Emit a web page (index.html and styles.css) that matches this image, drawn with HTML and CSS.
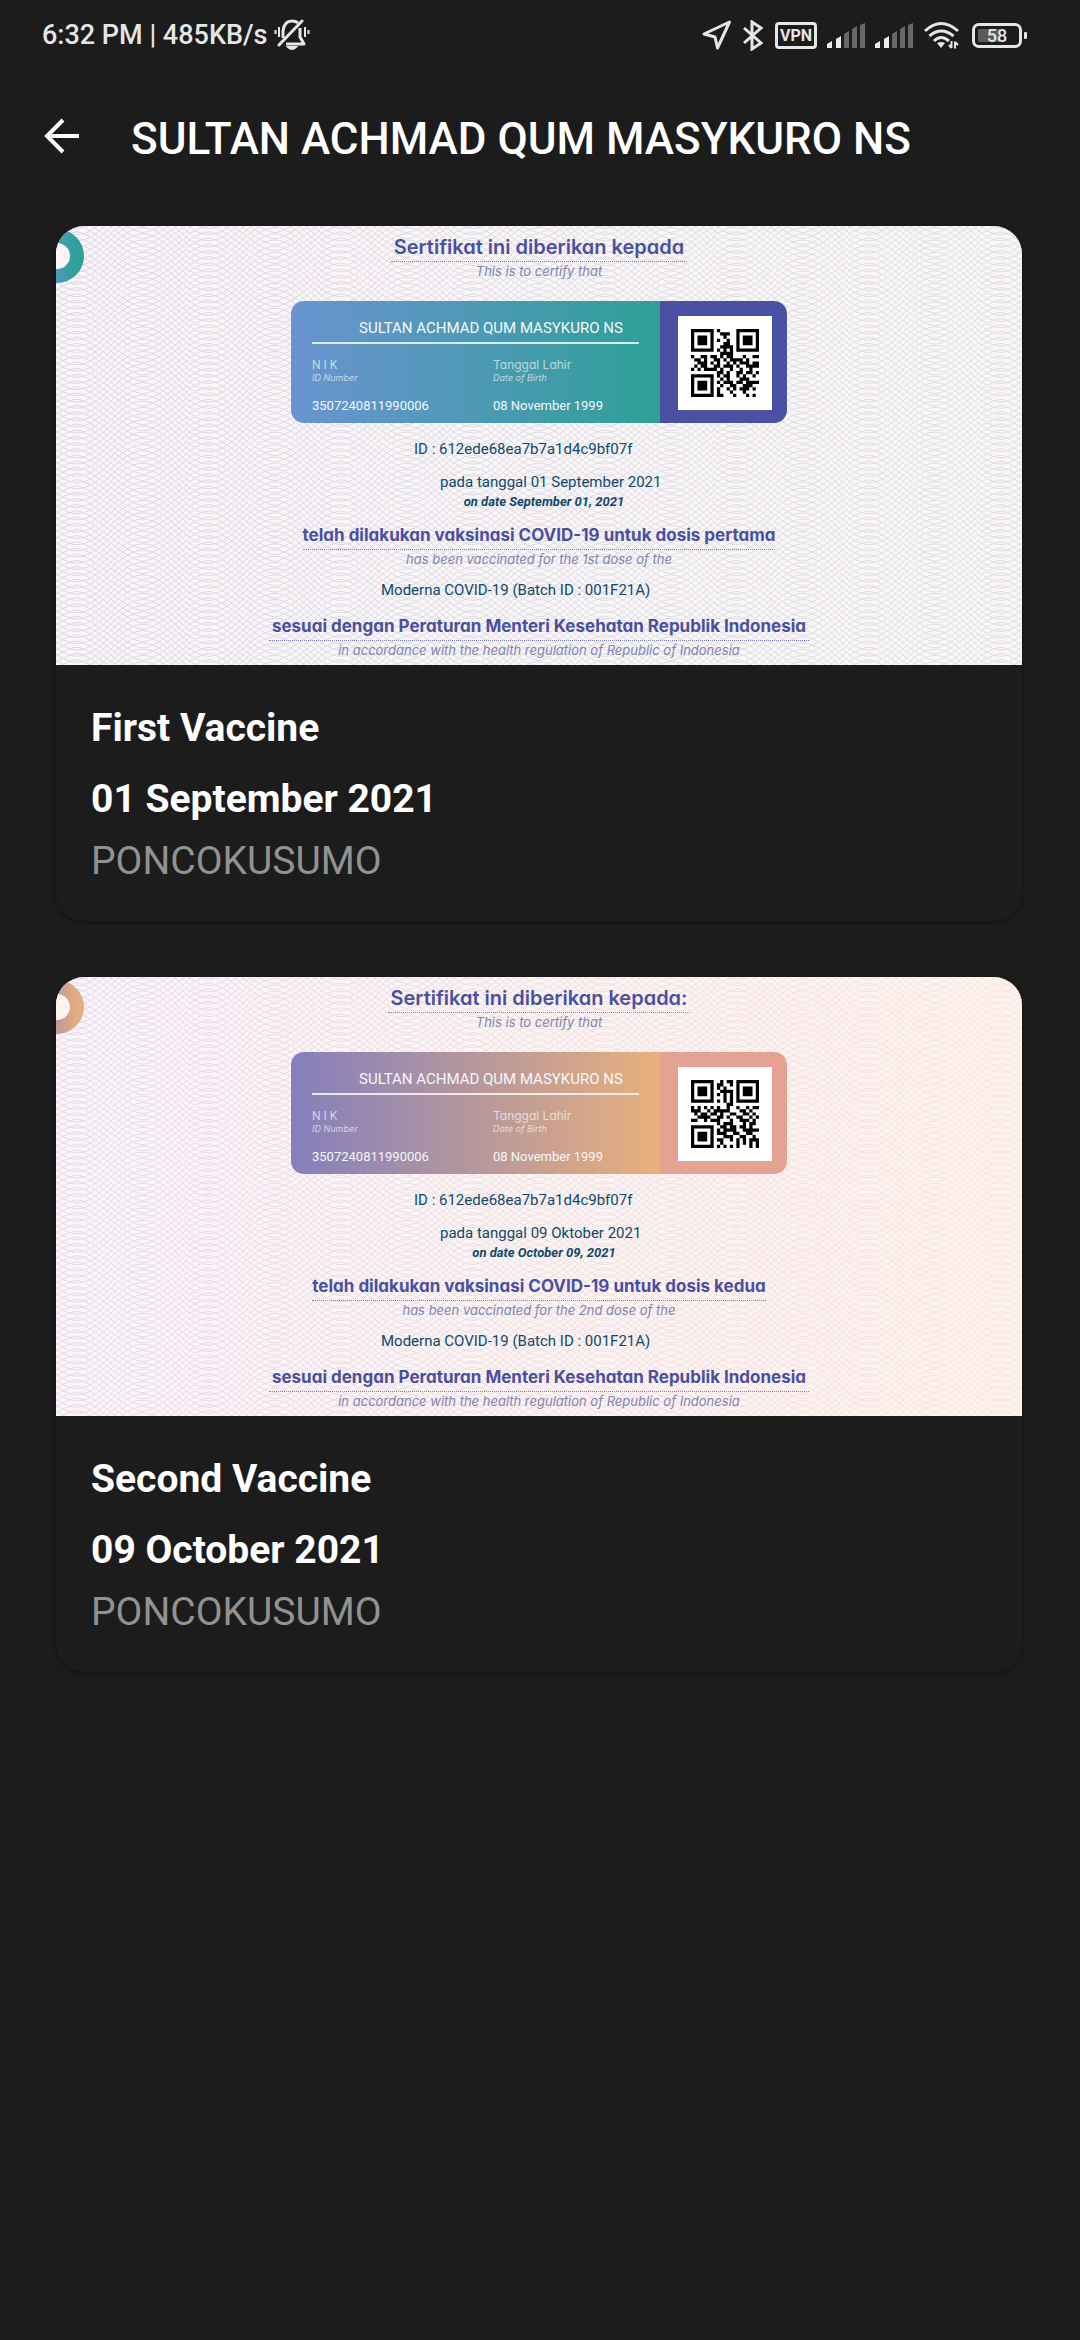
FILE: index.html
```html
<!DOCTYPE html>
<html lang="id">
<head>
<meta charset="utf-8">
<meta name="viewport" content="width=device-width, initial-scale=1">
<title>SULTAN ACHMAD QUM MASYKURO NS</title>
<link rel="stylesheet" href="styles.css">
</head>
<body>
<svg class="defs" aria-hidden="true">
  <defs>
    <path id="wave-a" d="M-45 19C-29 17 0-17 21-19C39-17 67 17 87 19C107 17 135-17 153-19"/>
    <path id="wave-b" d="M-45-19C-21-19-3 19 21 19C45 19 63-19 87-19C111-19 129 19 153 19"/>
    <g id="weave">
      <use href="#wave-a"/><use href="#wave-b" y="2"/>
    </g>
    <g id="weave-band">
      <use href="#weave"/><use href="#weave" y="6.2"/><use href="#weave" y="12.4"/><use href="#weave" y="18.6"/><use href="#weave" y="24.8"/>
    </g>
    <pattern id="guilloche" width="132" height="31" patternUnits="userSpaceOnUse">
      <g fill="none" stroke="#fff" stroke-width="1">
        <use href="#weave-band" y="-31"/><use href="#weave-band"/><use href="#weave-band" y="31"/>
      </g>
    </pattern>
    <mask id="guilloche-mask" maskUnits="userSpaceOnUse" x="0" y="0" width="3000" height="1000">
      <rect width="3000" height="1000" fill="url(#guilloche)"/>
    </mask>
    <linearGradient id="ink-cool"><stop stop-color="#dbd6e6"/><stop offset=".5" stop-color="#dddce5"/><stop offset="1" stop-color="#dcdfdf"/></linearGradient>
    <linearGradient id="ink-warm"><stop stop-color="#e3d9e9"/><stop offset=".5" stop-color="#eedfe4"/><stop offset="1" stop-color="#f7e6e0"/></linearGradient>
    <linearGradient id="ring-cool"><stop offset=".5" stop-color="#4a9ab4"/><stop offset="1" stop-color="#2fa199"/></linearGradient>
    <linearGradient id="ring-warm"><stop offset=".5" stop-color="#c09a9b"/><stop offset="1" stop-color="#e5ae80"/></linearGradient>
    <path id="finder" fill-rule="evenodd" d="M0 0h7v7h-7zM1 1v5h5v-5zM2 2h3v3h-3z"/>
    <g id="bars">
      <path fill="#ececec" d="M0 21l5-3v7H0zM9 16l5-3v12H9z"/>
      <path fill="#686868" d="M17 11l5-3v17h-5zM25 6l5-3v22h-5zM33 2l5-2v25h-5z"/>
    </g>
  </defs>
</svg>

<header class="status">
  <div class="status-side">
    <span>6:32 PM | 485KB/s</span>
    <svg class="bell" width="36" height="32" viewBox="0 0 36 32" fill="none" stroke="#e6e6e6" stroke-width="3" aria-hidden="true">
      <path d="M9 19V12Q10 2 18 2Q22 2 24 4M26 9V18L30 25H12" stroke-linejoin="round"/>
      <path d="M5 26L28 2" stroke-linecap="round"/>
      <path d="M14 28Q18 32 22 28Z" stroke-width="2" fill="#e6e6e6"/>
      <path d="M1.500 11V15M5 8V18M31 8V18M34.500 11V15" stroke-width="2"/>
    </svg>
  </div>
  <div class="status-side">
    <svg width="30" height="30" viewBox="0 0 30 30" fill="none" stroke="#e6e6e6" stroke-width="3" stroke-linejoin="round" aria-hidden="true"><path d="M27.500 2L2 14L13 17L15.500 28Z"/></svg>
    <svg class="bt" width="20" height="31" viewBox="0 0 20 31" fill="none" stroke="#e6e6e6" stroke-width="3" aria-hidden="true"><path d="M1 8L18 23L9 29V2L18 8L1 23"/></svg>
    <span class="vpn">VPN</span>
    <svg class="cell" width="38" height="25" viewBox="0 0 38 25" aria-hidden="true"><use href="#bars"/></svg>
    <svg class="cell" width="38" height="25" viewBox="0 0 38 25" aria-hidden="true"><use href="#bars"/></svg>
    <svg class="wifi" width="38" height="28" viewBox="0 0 38 28" fill="none" stroke="#e6e6e6" stroke-width="3" aria-hidden="true">
      <path d="M2 10Q18 -5 35 10M6.500 15Q18 5 30.500 15M11 20Q18 13 26 20"/>
      <path d="M14 22Q18 20 22 22L18 27Z" fill="#e6e6e6" stroke="none"/>
      <path d="M28.500 20V27M26 24L28.500 27M32 27.500V20.500M32 21L35 24" stroke-width="2"/>
    </svg>
    <span class="battery">58</span>
  </div>
</header>

<nav class="appbar">
  <button class="back" type="button" aria-label="Back">
    <svg width="36" height="36" viewBox="0 0 36 36" fill="none" stroke="#fff" stroke-width="4" aria-hidden="true"><path d="M35 18H4M19 2L3 18L19 34"/></svg>
  </button>
  <h1>SULTAN ACHMAD QUM MASYKURO NS</h1>
</nav>

<main class="cards">
  <article class="card">
    <section class="cert cert-cool">
      <svg class="backdrop" aria-hidden="true">
        <rect width="100%" height="100%" fill="url(#ink-cool)" mask="url(#guilloche-mask)"/>
        <circle cx="1" cy="30" r="13" fill="#faf5f6"/>
        <circle cx="1" cy="30" r="20" fill="none" stroke="url(#ring-cool)" stroke-width="14"/>
      </svg>
      <p class="head head-top">Sertifikat ini diberikan kepada</p>
      <p class="sub">This is to certify that</p>
      <div class="panel">
        <div class="identity">
          <p class="name">SULTAN ACHMAD QUM MASYKURO NS</p>
          <div class="fields">
            <div class="field"><p class="label nik">N I K</p><p class="hint">ID Number</p><p class="value">3507240811990006</p></div>
            <div class="field"><p class="label">Tanggal Lahir</p><p class="hint">Date of Birth</p><p class="value">08 November 1999</p></div>
          </div>
        </div>
        <div class="code">
          <svg width="68" height="68" viewBox="0 0 21 21" role="img" aria-label="QR code">
            <use href="#finder"/><use href="#finder" x="14"/><use href="#finder" y="14"/>
            <path d="M8 0h1v1h-1zM9 1h3v1h-3zM10 2h1v1h-1zM8 3h1v1h-1zM11 3h1v1h-1zM10 4h2v1h-2zM9 5h4v1h-4zM8 6h1v1h-1zM10 6h1v1h-1zM12 6h1v1h-1zM9 7h4v1h-4z
              M0 8h1v1h-1zM3 8h2v1h-2zM6 8h2v1h-2zM9 8h1v1h-1zM11 8h2v1h-2zM16 8h1v1h-1zM19 8h2v1h-2z
              M1 9h2v1h-2zM4 9h1v1h-1zM7 9h2v1h-2zM10 9h1v1h-1zM12 9h4v1h-4zM17 9h1v1h-1z
              M2 10h3v1h-3zM6 10h1v1h-1zM8 10h1v1h-1zM11 10h1v1h-1zM13 10h1v1h-1zM15 10h3v1h-3zM19 10h2v1h-2z
              M1 11h1v1h-1zM3 11h2v1h-2zM7 11h2v1h-2zM10 11h3v1h-3zM14 11h1v1h-1zM17 11h4v1h-4z
              M0 12h1v1h-1zM2 12h1v1h-1zM4 12h4v1h-4zM9 12h1v1h-1zM12 12h1v1h-1zM15 12h1v1h-1zM18 12h1v1h-1z
              M8 13h2v1h-2zM11 13h1v1h-1zM14 13h2v1h-2zM17 13h2v1h-2zM20 13h1v1h-1z
              M8 14h1v1h-1zM10 14h2v1h-2zM14 14h1v1h-1zM16 14h1v1h-1zM19 14h1v1h-1z
              M9 15h1v1h-1zM11 15h1v1h-1zM15 15h3v1h-3zM8 16h1v1h-1zM10 16h3v1h-3zM14 16h2v1h-2zM17 16h4v1h-4z
              M9 17h1v1h-1zM12 17h2v1h-2zM16 17h3v1h-3zM8 18h1v1h-1zM11 18h1v1h-1zM13 18h1v1h-1zM15 18h3v1h-3zM19 18h1v1h-1z
              M8 19h1v1h-1zM12 19h1v1h-1zM16 19h1v1h-1zM8 20h2v1h-2zM13 20h1v1h-1zM17 20h1v1h-1zM19 20h1v1h-1z"/>
          </svg>
        </div>
      </div>
      <div class="sheet">
        <p class="fact fact-id">ID : 612ede68ea7b7a1d4c9bf07f</p>
        <p class="fact fact-date">pada tanggal 01 September 2021</p>
        <p class="date-en">on date September 01, 2021</p>
        <p class="head head-dose">telah dilakukan vaksinasi COVID-19 untuk dosis pertama</p>
        <p class="sub">has been vaccinated for the 1st dose of the</p>
        <p class="fact fact-batch">Moderna COVID-19 (Batch ID : 001F21A)</p>
        <p class="head head-rule">sesuai dengan Peraturan Menteri Kesehatan Republik Indonesia</p>
        <p class="sub">in accordance with the health regulation of Republic of Indonesia</p>
      </div>
    </section>
    <div class="summary">
      <h2>First Vaccine</h2>
      <p class="date">01 September 2021</p>
      <p class="place">PONCOKUSUMO</p>
    </div>
  </article>

  <article class="card">
    <section class="cert cert-warm">
      <svg class="backdrop" aria-hidden="true">
        <rect width="100%" height="100%" fill="url(#ink-warm)" mask="url(#guilloche-mask)"/>
        <circle cx="1" cy="30" r="13" fill="#fdf3f3"/>
        <circle cx="1" cy="30" r="20" fill="none" stroke="url(#ring-warm)" stroke-width="14"/>
      </svg>
      <p class="head head-top">Sertifikat ini diberikan kepada:</p>
      <p class="sub">This is to certify that</p>
      <div class="panel">
        <div class="identity">
          <p class="name">SULTAN ACHMAD QUM MASYKURO NS</p>
          <div class="fields">
            <div class="field"><p class="label nik">N I K</p><p class="hint">ID Number</p><p class="value">3507240811990006</p></div>
            <div class="field"><p class="label">Tanggal Lahir</p><p class="hint">Date of Birth</p><p class="value">08 November 1999</p></div>
          </div>
        </div>
        <div class="code">
          <svg width="68" height="68" viewBox="0 0 21 21" role="img" aria-label="QR code">
            <use href="#finder"/><use href="#finder" x="14"/><use href="#finder" y="14"/>
            <path d="M9 0h1v1h-1zM11 0h2v1h-2zM8 1h2v1h-2zM12 1h1v1h-1zM8 2h1v1h-1zM10 2h1v1h-1zM9 3h4v1h-4zM8 4h1v1h-1zM10 4h1v1h-1zM12 4h1v1h-1zM10 5h1v1h-1zM12 5h1v1h-1zM8 6h1v1h-1zM10 6h1v1h-1zM12 6h1v1h-1zM11 7h2v1h-2z
              M0 8h1v1h-1zM2 8h1v1h-1zM4 8h1v1h-1zM6 8h1v1h-1zM8 8h1v1h-1zM11 8h1v1h-1zM14 8h1v1h-1zM17 8h1v1h-1zM19 8h2v1h-2z
              M0 9h3v1h-3zM5 9h1v1h-1zM7 9h5v1h-5zM15 9h2v1h-2zM18 9h1v1h-1z
              M1 10h1v1h-1zM3 10h2v1h-2zM6 10h2v1h-2zM9 10h1v1h-1zM12 10h2v1h-2zM16 10h2v1h-2zM19 10h1v1h-1z
              M2 11h4v1h-4zM8 11h2v1h-2zM11 11h1v1h-1zM14 11h2v1h-2zM18 11h1v1h-1zM20 11h1v1h-1z
              M0 12h2v1h-2zM4 12h1v1h-1zM6 12h3v1h-3zM12 12h1v1h-1zM15 12h3v1h-3zM19 12h1v1h-1z
              M8 13h1v1h-1zM10 13h3v1h-3zM16 13h1v1h-1zM18 13h2v1h-2zM9 14h2v1h-2zM12 14h2v1h-2zM15 14h2v1h-2zM18 14h1v1h-1z
              M8 15h1v1h-1zM10 15h4v1h-4zM16 15h5v1h-5zM8 16h3v1h-3zM13 16h2v1h-2zM17 16h2v1h-2z
              M10 17h3v1h-3zM15 17h2v1h-2zM19 17h1v1h-1zM8 18h2v1h-2zM12 18h1v1h-1zM14 18h1v1h-1zM16 18h1v1h-1zM18 18h3v1h-3z
              M9 19h1v1h-1zM14 19h1v1h-1zM16 19h1v1h-1zM18 19h1v1h-1zM20 19h1v1h-1zM8 20h1v1h-1zM10 20h1v1h-1zM12 20h1v1h-1zM14 20h1v1h-1zM18 20h1v1h-1zM20 20h1v1h-1z"/>
          </svg>
        </div>
      </div>
      <div class="sheet">
        <p class="fact fact-id">ID : 612ede68ea7b7a1d4c9bf07f</p>
        <p class="fact fact-date">pada tanggal 09 Oktober 2021</p>
        <p class="date-en">on date October 09, 2021</p>
        <p class="head head-dose">telah dilakukan vaksinasi COVID-19 untuk dosis kedua</p>
        <p class="sub">has been vaccinated for the 2nd dose of the</p>
        <p class="fact fact-batch">Moderna COVID-19 (Batch ID : 001F21A)</p>
        <p class="head head-rule">sesuai dengan Peraturan Menteri Kesehatan Republik Indonesia</p>
        <p class="sub">in accordance with the health regulation of Republic of Indonesia</p>
      </div>
    </section>
    <div class="summary">
      <h2>Second Vaccine</h2>
      <p class="date">09 October 2021</p>
      <p class="place">PONCOKUSUMO</p>
    </div>
  </article>
</main>
</body>
</html>
```
FILE: styles.css
```css
* {
  box-sizing: border-box;
  margin: 0;
  padding: 0;
}

body {
  min-height: 100vh;
  background: #1c1c1c;
  color: #fff;
  font-family: Roboto, "Liberation Sans", sans-serif;
}

svg {
  display: block;
  flex: none;
}

.defs {
  position: absolute;
  width: 0;
  height: 0;
}

/* Status bar */
.status {
  display: flex;
  justify-content: space-between;
  padding: 18px 58px 0 42px;
  height: 70px;
  color: #e6e6e6;
  font-size: 27px;
  font-weight: 500;
  line-height: 36px;
}

.status-side {
  display: flex;
  align-items: center;
  height: 34px;
}

.bell {
  margin-left: 7px;
}

.bt {
  margin-left: 11px;
}

.vpn {
  margin-left: 12px;
  width: 42px;
  height: 27px;
  border: 3px solid #e6e6e6;
  border-radius: 4px;
  font-size: 16px;
  font-weight: 700;
  line-height: 21px;
  text-align: center;
}

.cell {
  margin-left: 10px;
}

.wifi {
  margin: 0 11px 0 10px;
}

.battery {
  position: relative;
  width: 50px;
  height: 25px;
  border: 3px solid #e6e6e6;
  border-radius: 7px;
  background: linear-gradient(#5a5a5a, #5a5a5a) 3px 3px / 22px 13px no-repeat;
  font-size: 18px;
  line-height: 20px;
  text-align: center;
}

.battery::after {
  content: "";
  position: absolute;
  top: 6px;
  right: -8px;
  width: 3px;
  height: 7px;
  border-radius: 1px;
  background: #e6e6e6;
}

/* App bar */
.appbar {
  display: flex;
  align-items: center;
  gap: 51px;
  height: 132px;
  padding: 0 44px;
}

.back {
  border: 0;
  background: none;
  cursor: pointer;
}

h1 {
  padding-top: 6px;
  font-size: 44px;
  font-weight: 500;
  line-height: 56px;
  white-space: nowrap;
}

/* Cards */
.cards {
  display: flex;
  flex-direction: column;
  gap: 56px;
  padding: 24px 58px 56px 56px;
}

.card {
  overflow: hidden;
  border-radius: 28px;
  box-shadow: 0 2px 5px rgba(0, 0, 0, 0.35);
}

.summary {
  padding: 38px 35px 35px;
  font-size: 39px;
}

h2,
.date {
  font-size: 39px;
  font-weight: 700;
  line-height: 50px;
}

.date {
  margin-top: 21px;
}

.place {
  margin-top: 12px;
  color: #929292;
  line-height: 50px;
}

/* Certificate */
.cert {
  position: relative;
  display: flex;
  flex-direction: column;
  align-items: center;
  padding: 9px 0 6px;
}

.cert-cool {
  background: #faf5f6;
}

.cert-warm {
  background: linear-gradient(90deg, #fbf4f9, #fdf3f2 60%, #fef2ed);
}

.backdrop {
  position: absolute;
  inset: 0;
  width: 100%;
  height: 100%;
}

.cert p,
.panel,
.sheet {
  position: relative;
  white-space: nowrap;
}

.head,
.sub,
.label,
.hint {
  font-family: Inter, "Open Sans", sans-serif;
  font-feature-settings: "cv11";
}

.head {
  padding-bottom: 2px;
  border-bottom: 1px dotted #8583bb;
  color: #4a50a0;
  font-size: 17px;
  font-weight: 700;
  line-height: 24px;
}

.head-top {
  padding-right: 3px;
  padding-left: 3px;
  font-size: 20px;
  font-weight: 600;
}

.sub {
  color: #7e84b2;
  font-size: 13px;
  font-style: italic;
  line-height: 18px;
}

.panel {
  display: flex;
  width: 496px;
  height: 122px;
  margin-top: 21px;
  overflow: hidden;
  border-radius: 13px;
}

.identity {
  width: 369px;
  padding: 18px 21px 0;
}

.cert-cool .identity {
  background: linear-gradient(90deg, #6a94d0, #4d99b5 50%, #2da097);
}

.cert-warm .identity {
  background: linear-gradient(90deg, #857fbd, #b6979d 50%, #e9b07c);
}

.name {
  padding-left: 47px;
  padding-bottom: 5px;
  border-bottom: 2px solid rgba(255, 255, 255, 0.8);
  color: #f4f8fb;
  font-size: 15px;
  line-height: 18px;
}

.fields {
  display: grid;
  grid-template-columns: 181px 1fr;
  padding-top: 14px;
}

.label {
  color: rgba(255, 255, 255, 0.65);
  font-size: 12px;
  line-height: 14px;
}

.nik {
  font-family: Roboto, sans-serif;
}

.hint {
  color: rgba(255, 255, 255, 0.65);
  font-size: 9px;
  font-style: italic;
  line-height: 12px;
}

.value {
  margin-top: 14px;
  color: #f4f8fb;
  font-size: 13px;
  line-height: 16px;
}

.code {
  flex: 1;
  padding: 15px 15px 13px 18px;
}

.code svg {
  width: 94px;
  height: 94px;
  padding: 13px;
  background: #fff;
}

.cert-cool .code {
  background: #4a50a2;
}

.cert-warm .code {
  background: #e5a192;
}

.sheet {
  display: flex;
  flex-direction: column;
  align-items: center;
  width: 552px;
}

.fact {
  align-self: flex-start;
  color: #0f4a6c;
  font-size: 15px;
  line-height: 18px;
}

.fact-id {
  margin: 17px 0 0 151px;
}

.fact-date {
  margin: 15px 0 0 177px;
}

.fact-batch {
  margin: 13px 0 0 118px;
}

.date-en {
  margin: 3px 0 0 10px;
  color: #0f4a6c;
  font-size: 13px;
  font-style: italic;
  font-weight: 700;
  line-height: 16px;
}

.head-dose {
  margin-top: 13px;
}

.head-rule {
  margin-top: 15px;
  padding-right: 3px;
  padding-left: 3px;
}
```
